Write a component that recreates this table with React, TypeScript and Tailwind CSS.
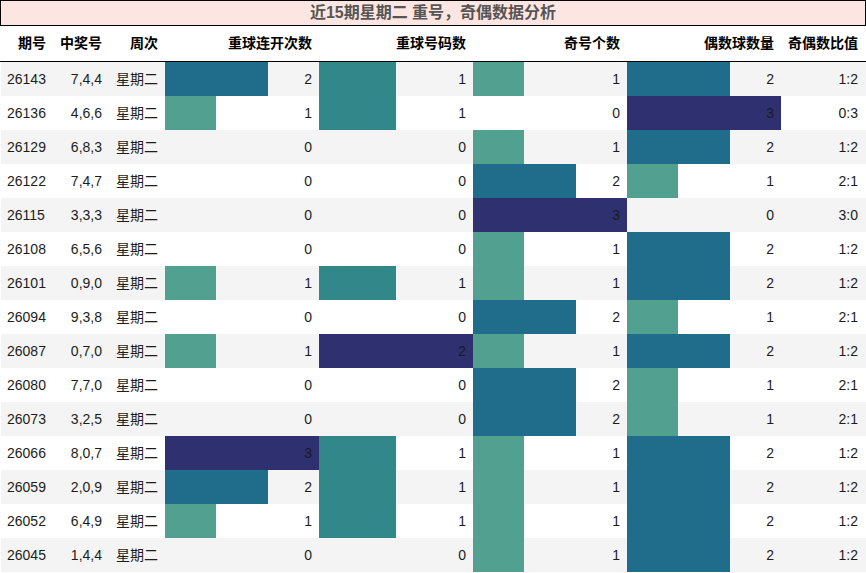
const rows: [string, string, number, number, number, number, string][] = [
  ["26143", "7,4,4", 2, 1, 1, 2, "1:2"],
  ["26136", "4,6,6", 1, 1, 0, 3, "0:3"],
  ["26129", "6,8,3", 0, 0, 1, 2, "1:2"],
  ["26122", "7,4,7", 0, 0, 2, 1, "2:1"],
  ["26115", "3,3,3", 0, 0, 3, 0, "3:0"],
  ["26108", "6,5,6", 0, 0, 1, 2, "1:2"],
  ["26101", "0,9,0", 1, 1, 1, 2, "1:2"],
  ["26094", "9,3,8", 0, 0, 2, 1, "2:1"],
  ["26087", "0,7,0", 1, 2, 1, 2, "1:2"],
  ["26080", "7,7,0", 0, 0, 2, 1, "2:1"],
  ["26073", "3,2,5", 0, 0, 2, 1, "2:1"],
  ["26066", "8,0,7", 3, 1, 1, 2, "1:2"],
  ["26059", "2,0,9", 2, 1, 1, 2, "1:2"],
  ["26052", "6,4,9", 1, 1, 1, 2, "1:2"],
  ["26045", "1,4,4", 0, 0, 1, 2, "1:2"],
];

const maxes = [3, 2, 3, 3];

// colour by share of the column max
const barColor = (frac: number) => {
  if (frac >= 1) return "bg-[#2e3070]";
  if (frac > 0.6) return "bg-[#1f6c8b]";
  if (frac >= 0.5) return "bg-[#32878b]";
  return "bg-[#52a08f]";
};

const BarCell = ({ value, max }: { value: number; max: number }) => (
  <div className="relative w-[154px] h-full flex items-center justify-end pr-[7px]">
    {value > 0 && (
      <div
        className={`absolute left-0 top-0 h-full ${barColor(value / max)}`}
        style={{ width: `${(value / max) * 154}px` }}
      />
    )}
    <span className="relative">{value}</span>
  </div>
);

export default function App() {
  return (
    <div
      className="w-[866px] h-[573px] bg-white text-[14px] text-[#1c1c1c] overflow-hidden"
      style={{ fontFamily: '"Liberation Sans", "Noto Sans CJK SC", sans-serif' }}
    >
      <div className="h-[26px] border border-black bg-[#fde6e1] text-center font-bold text-[16px] leading-[24px] text-[#555]">
        近15期星期二 重号，奇偶数据分析
      </div>

      <div className="flex h-[36px] border-b border-black font-bold text-black items-center">
        <div className="w-[52px] text-right pr-[6px]">期号</div>
        <div className="w-[56px] text-right pr-[6px]">中奖号</div>
        <div className="w-[57px] text-right pr-[7px]">周次</div>
        <div className="w-[154px] text-right pr-[7px]">重球连开次数</div>
        <div className="w-[154px] text-right pr-[7px]">重球号码数</div>
        <div className="w-[154px] text-right pr-[7px]">奇号个数</div>
        <div className="w-[154px] text-right pr-[7px]">偶数球数量</div>
        <div className="w-[85px] text-right pr-[8px]">奇偶数比值</div>
      </div>

      {rows.map((r, i) => (
        <div key={r[0]} className={`flex h-[34px] ml-px items-center ${i % 2 === 0 ? "bg-[#f4f4f4]" : "bg-white"}`}>
          <div className="w-[51px] pl-[6px]">{r[0]}</div>
          <div className="w-[56px] text-right pr-[6px]">{r[1]}</div>
          <div className="w-[57px] text-right pr-[7px]">星期二</div>
          <BarCell value={r[2]} max={maxes[0]} />
          <BarCell value={r[3]} max={maxes[1]} />
          <BarCell value={r[4]} max={maxes[2]} />
          <BarCell value={r[5]} max={maxes[3]} />
          <div className="w-[85px] text-right pr-[8px]">{r[6]}</div>
        </div>
      ))}
    </div>
  );
}
